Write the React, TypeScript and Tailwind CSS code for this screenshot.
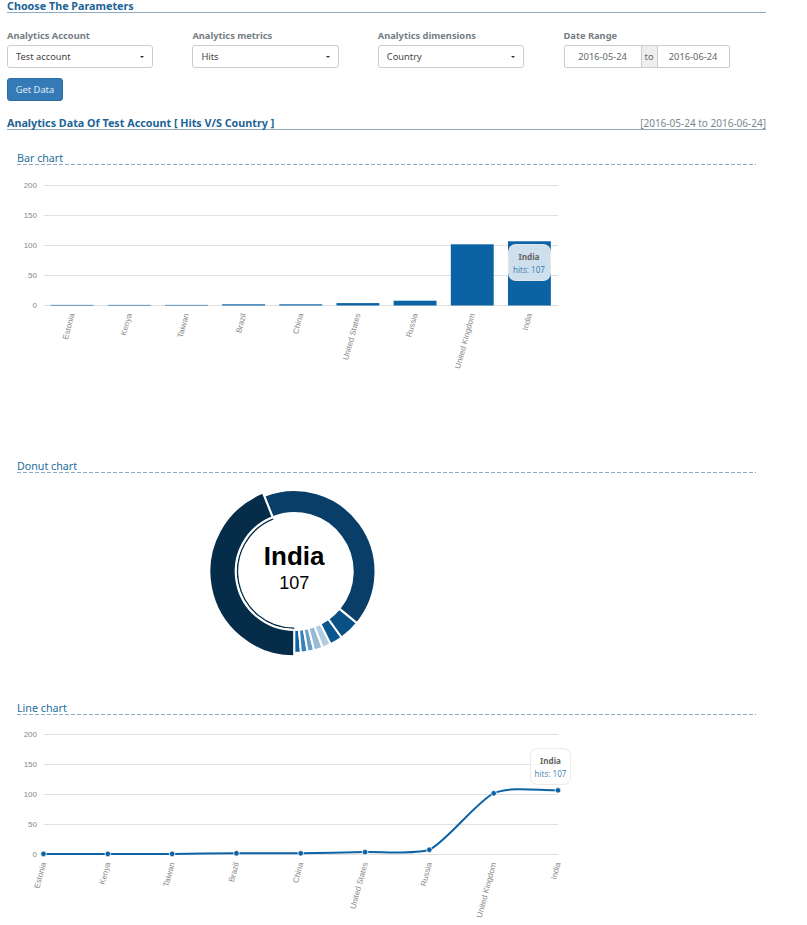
import React from "react";

type Row = { country: string; hits: number };

const DATA: Row[] = [
  { country: "Estonia", hits: 1 },
  { country: "Kenya", hits: 1 },
  { country: "Taiwan", hits: 1 },
  { country: "Brazil", hits: 2 },
  { country: "China", hits: 2 },
  { country: "United States", hits: 4 },
  { country: "Russia", hits: 8 },
  { country: "United Kingdom", hits: 102 },
  { country: "India", hits: 107 },
];

const DONUT_COLORS = [
  "#0b62a4", "#3980b5", "#679dc6", "#95bbd7", "#b0cce1",
  "#095791", "#095085", "#083e67", "#052c48",
];

const TICKS = [0, 50, 100, 150, 200];
const LEFT = 26.5;
const RIGHT = 541;
const BOTTOM = 133.5;
const UNIT = 0.6;

const yOf = (v: number) => BOTTOM - v * UNIT;

function Grid() {
  return (
    <g>
      {TICKS.map((t) => (
        <g key={t}>
          <text x={20} y={yOf(t) + 2.8} textAnchor="end" fontSize="8" fill="#888">
            {t}
          </text>
          <path d={`M${LEFT},${yOf(t)}H${RIGHT}`} stroke="#e0e0e0" strokeWidth="1" />
        </g>
      ))}
    </g>
  );
}

function XLabel({ x, children }: { x: number; children: string }) {
  return (
    <text
      transform={`translate(${x + 2.6},${BOTTOM + 8.7}) rotate(-75)`}
      textAnchor="end"
      fontSize="8"
      fill="#888"
    >
      {children}
    </text>
  );
}

function BarChart() {
  const step = (RIGHT - LEFT) / DATA.length;
  return (
    <svg width="560" height="230" className="block font-['Liberation_Sans',sans-serif]">
      <Grid />
      {DATA.map((d, i) => (
        <g key={d.country}>
          <rect
            x={LEFT + step * (i + 0.125)}
            y={yOf(d.hits)}
            width={step * 0.75}
            height={d.hits * UNIT}
            fill="#0b62a4"
          />
          <XLabel x={LEFT + step * (i + 0.5)}>{d.country}</XLabel>
        </g>
      ))}
    </svg>
  );
}

function LineChart() {
  const step = (RIGHT - LEFT) / (DATA.length - 1);
  const pts = DATA.map((d, i) => ({ x: LEFT + step * i, y: yOf(d.hits) }));
  const grads = pts.map((_, i) => {
    const a = pts[Math.max(0, i - 1)];
    const b = pts[Math.min(pts.length - 1, i + 1)];
    return (b.y - a.y) / (b.x - a.x);
  });
  let path = `M${pts[0].x},${pts[0].y}`;
  for (let i = 1; i < pts.length; i++) {
    const p = pts[i - 1];
    const c = pts[i];
    const ix = (c.x - p.x) / 4;
    path += `C${p.x + ix},${Math.min(BOTTOM, p.y + ix * grads[i - 1])},${c.x - ix},${Math.min(BOTTOM, c.y - ix * grads[i])},${c.x},${c.y}`;
  }
  return (
    <svg width="560" height="200" className="block overflow-visible font-['Liberation_Sans',sans-serif]">
      <Grid />
      <path d={path} fill="none" stroke="#0b62a4" strokeWidth="2" />
      {pts.map((p, i) => (
        <g key={i}>
          <circle cx={p.x} cy={p.y} r="2.8" fill="#0b62a4" stroke="#fff" strokeWidth="0.8" />
          <XLabel x={p.x}>{DATA[i].country}</XLabel>
        </g>
      ))}
    </svg>
  );
}

function DonutChart() {
  const cx = 277.2;
  const cy = 91.5;
  const min = 0.0575;
  const total = DATA.reduce((s, d) => s + d.hits, 0);
  const span = Math.PI * 1.9999 - min * DATA.length;
  const at = (r: number, a: number) => `${cx + r * Math.sin(a)},${cy + r * Math.cos(a)}`;
  let last = 0;
  const segments = DATA.map((d, i) => {
    const a0 = last;
    const a1 = a0 + min + (span * d.hits) / total;
    last = a1;
    return { a0, a1, color: DONUT_COLORS[i], selected: i === DATA.length - 1 };
  });
  const inner = 58.5;
  const sel = segments[segments.length - 1];
  return (
    <svg width="560" height="200" className="block font-['Liberation_Sans',sans-serif]">
      <path d={`M${at(56.7, sel.a0)}A56.7,56.7,0,0,0,${at(56.7, sel.a1)}`} fill="none" stroke={sel.color} strokeWidth="1.4" />
      {segments.map((s, i) => {
        const outer = s.selected ? 84.8 : 81.3;
        const large = s.a1 - s.a0 > Math.PI ? 1 : 0;
        return (
          <path
            key={i}
            d={`M${at(inner, s.a0)}L${at(outer, s.a0)}A${outer},${outer},0,${large},0,${at(outer, s.a1)}L${at(inner, s.a1)}A${inner},${inner},0,${large},1,${at(inner, s.a0)}Z`}
            fill={s.color}
            stroke="#fff"
            strokeWidth="2"
          />
        );
      })}
      <text x={cx} y={85} textAnchor="middle" fontSize="26" fontWeight="bold" fill="#000">
        India
      </text>
      <text x={cx} y={109} textAnchor="middle" fontSize="18" fill="#000">
        107
      </text>
    </svg>
  );
}

function Tooltip({ className }: { className: string }) {
  return (
    <div
      className={`absolute h-[37px] rounded-[8px] border border-[#e6e6e6]/80 bg-white/80 pt-[5px] text-center text-[8.2px] leading-[13px] ${className}`}
    >
      <div className="font-bold text-[#666]">India</div>
      <div className="font-['Open_Sans',sans-serif] text-[8.1px] text-[#0b62a4]/85">hits: 107</div>
    </div>
  );
}

function Select({ label, value }: { label: string; value: string }) {
  return (
    <div className="w-[185.4px]">
      <div className="h-[15px] text-[9.3px] leading-[12px] font-bold text-[#757d84]">{label}</div>
      <button className="flex h-[23px] w-[146.3px] items-center justify-between rounded-[3px] border border-[#ccc] bg-white pr-[8px] pl-[8px] text-[9.3px] text-[#444]">
        <span>{value}</span>
        <svg width="4" height="2" viewBox="0 0 4 2">
          <path d="M0 0H4L2 2Z" fill="#333" />
        </svg>
      </button>
    </div>
  );
}

function Panel({ title, className, children }: { title: string; className: string; children: React.ReactNode }) {
  return (
    <section className={`mx-[10px] ${className}`}>
      <h3 className="h-[14px] text-[10.7px] leading-[17px] text-[#236e9c]">{title}</h3>
      <svg width="739" height="1" className="block">
        <path d="M0 .5H739" stroke="#8fabc0" strokeDasharray="4 2" />
      </svg>
      <div className="relative">{children}</div>
    </section>
  );
}

export default function App() {
  return (
    <main className="h-[925px] w-full overflow-hidden bg-white pl-[7px] font-['Noto_Sans','Open_Sans',sans-serif]">
      <div className="w-[759px]">
        <h2 className="h-[13px] border-b border-[#8fabc0] text-[10.76px] leading-[12px] font-bold text-[#1c6496]">
          Choose The Parameters
        </h2>
        <div className="flex pt-[17px]">
          <Select label="Analytics Account" value="Test account" />
          <Select label="Analytics metrics" value="Hits" />
          <Select label="Analytics dimensions" value="Country" />
          <div className="ml-[0.4px]">
            <div className="h-[15px] text-[9.3px] leading-[12px] font-bold text-[#757d84]">Date Range</div>
            <div className="flex h-[23px] w-[166px] items-stretch overflow-hidden rounded-[2px] border border-[#ccc] text-[9.3px] leading-[21px] text-[#666]">
              <span className="w-[76px] text-center">2016-05-24</span>
              <span className="w-[17px] border-x border-[#ccc] bg-[#eee] text-center">to</span>
              <span className="flex-1 text-center">2016-06-24</span>
            </div>
          </div>
        </div>
        <button className="mt-[10px] block h-[23px] w-[56px] rounded-[3px] border border-[#2e6da4] bg-[#337ab7] text-center text-[9.3px] leading-[21px] text-white/85">
          Get Data
        </button>
        <div className="mt-[15px] flex h-[14px] justify-between border-b border-[#8fabc0] text-[10.76px] leading-[14px]">
          <h2 className="font-bold text-[#1c6496]">Analytics Data Of Test Account [ Hits V/S Country ]</h2>
          <span className="text-[10px] text-[#7d868c]">[2016-05-24 to 2016-06-24]</span>
        </div>
        <Panel title="Bar chart" className="mt-[20px] h-[308px]">
          <div className="pt-[7px]">
            <BarChart />
          </div>
          <Tooltip className="top-[79px] left-[490.5px] w-[43px]" />
        </Panel>
        <Panel title="Donut chart" className="h-[242px]">
          <div className="pt-[7px]">
            <DonutChart />
          </div>
        </Panel>
        <Panel title="Line chart" className="h-[225px]">
          <div className="pt-[6px]">
            <LineChart />
          </div>
          <Tooltip className="top-[33px] left-[513px] w-[41px]" />
        </Panel>
      </div>
    </main>
  );
}
